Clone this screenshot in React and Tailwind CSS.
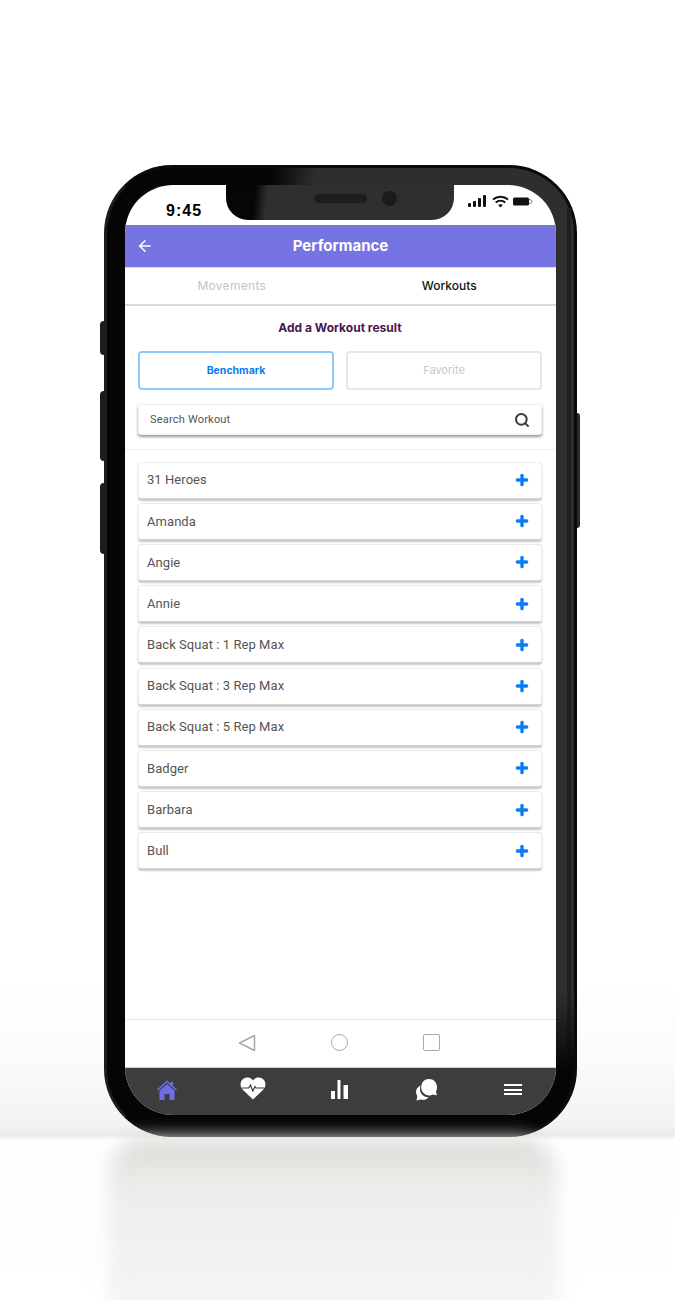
import { ArrowLeft, Plus, Search } from "lucide-react";

const workouts = [
  "31 Heroes",
  "Amanda",
  "Angie",
  "Annie",
  "Back Squat : 1 Rep Max",
  "Back Squat : 3 Rep Max",
  "Back Squat : 5 Rep Max",
  "Badger",
  "Barbara",
  "Bull",
];

function StatusIcons() {
  return (
    <div className="flex w-[102px] items-center gap-[4px] pl-[14px] pt-[10px]">
      <svg width="20" height="13" viewBox="0 0 20 13" fill="#111">
        <rect x="0" y="8" width="3" height="4" rx="1" />
        <rect x="5" y="6" width="3" height="6" rx="1" />
        <rect x="10" y="3" width="3" height="9" rx="1" />
        <rect x="15" y="0" width="3" height="12" rx="1" />
      </svg>
      <svg width="17" height="13" viewBox="0 0 17 13" fill="none" stroke="#111" strokeWidth="2">
        <path d="M1 4.500c4.200-3.700 10.800-3.700 15 0" />
        <path d="M3.700 7.500c2.800-2.300 6.800-2.300 9.600 0" />
        <path d="M8.500 12.500l-2.400-2.600c1.400-1 3.400-1 4.800 0z" fill="#111" stroke="none" />
      </svg>
      <svg width="20" height="10" viewBox="0 0 20 10">
        <rect x="0" y="0.500" width="16" height="8" rx="1.500" fill="#111" />
        <path d="M16 2.500c2 0 3 1 3 2s-1 2-3 2" fill="none" stroke="#777" strokeWidth="1" />
      </svg>
    </div>
  );
}

function Notch() {
  return (
    <div className="flex h-[35px] w-[228px] items-center gap-[15px] rounded-b-[22px] bg-[linear-gradient(96deg,#060606_0,#060606_30px,#2f2f2f_42px)] pb-[8px] pl-[88px]">
      <div className="h-[9px] w-[53px] shrink-0 rounded-full bg-[#1d1d1d]" />
      <div className="h-[15px] w-[15px] shrink-0 rounded-full bg-[#1b1b1b]" />
    </div>
  );
}

function WorkoutRow({ name }) {
  return (
    <div className="flex h-[37px] items-center justify-between rounded-[3px] border border-[#ececec] border-b-[#d4d4d4] bg-white pl-[8px] pr-[11px] shadow-[0_2px_2px_rgba(0,0,0,0.22)]">
      <span className="text-[13px] tracking-[0.06px] text-[#555]">{name}</span>
      <Plus size={16} strokeWidth={5} className="text-[#0a7cf5]" />
    </div>
  );
}

function BottomNav() {
  return (
    <div className="grid h-[48px] grid-cols-5 items-center justify-items-center border-t border-[#e8c9cf] bg-[#3d3d3d] pb-[4px]">
      <svg width="20" height="20" viewBox="0 0 20 20" fill="#6f6ee8" className="-ml-[2px]">
        <path d="M10 0.500L0 9.500l1 1L10 2.600l9 7.900 1-1-4-3.500V2h-2.500v1.800z" />
        <path d="M10 4L2.500 10.500V20h5v-6h5v6h5v-9.500z" />
      </svg>
      <svg width="26" height="23" viewBox="0 0 26 23" fill="#fff" className="-ml-[2px] -mt-[2px]">
        <path d="M13 22.500L3 13C-1.500 8.500 0.500 1 7 0.500c2.600-.2 4.800 1 6 3 1.200-2 3.400-3.200 6-3 6.500.5 8.500 8 4 12.500z" />
        <path d="M2 11h6.800l1.600-3 2.400 6 2.200-4.400 1 1.400H24" fill="none" stroke="#3d3d3d" strokeWidth="1.200" />
      </svg>
      <svg width="18" height="19" viewBox="0 0 18 19" fill="#fff" className="-ml-[1px]">
        <rect x="0" y="11" width="4" height="8" />
        <rect x="6.500" y="0" width="3" height="19" />
        <rect x="12.500" y="5" width="4.500" height="14" />
      </svg>
      <svg width="21" height="22" viewBox="0 0 21 22" fill="#fff" className="-ml-[1px]">
        <path d="M5 6.500C2 7.500 0 10 0 13c0 1.500.5 2.800 1.300 4L.5 21.500l4.200-1c1.800.6 4 .5 5.800-.5 1-.6 1.500-1.300 2-2-4.500.4-8.300-3-8.500-7.500 0-1.500.1-2.800.5-4z" />
        <path d="M13 0C8.500 0 5.200 3.500 5.200 8.300c0 4.500 3.500 8.200 7.800 8.200 1.300 0 2.800-.4 3.800-1l4.200.8-1.100-3.700c1-1.300 1.100-2.800 1.100-4.300C21 3.500 17.500 0 13 0z" />
      </svg>
      <div className="flex w-[18px] flex-col gap-[2.500px]">
        <div className="h-[2px] bg-white" />
        <div className="h-[2px] bg-white" />
        <div className="h-[2px] bg-white" />
      </div>
    </div>
  );
}

export default function App() {
  return (
    <div className="h-[1300px] w-[675px] overflow-hidden bg-[linear-gradient(180deg,#ffffff_0,#ffffff_980px,#fbfbfa_1060px,#f4f3f1_1125px,#eceae8_1135px,#fefefe_1140px,#ffffff_1300px)] pl-[104px] pt-[165px] font-['Roboto',sans-serif]">
      {/* phone body */}
      <div className="relative h-[972px] w-[473px] rounded-[68px] border-[3px] border-[#0a0a0a] border-l-[#1c1c1c] bg-[linear-gradient(100deg,#050505_0,#050505_26%,#2e2e2e_33%,#2e2e2e_100%)] py-[17px] pl-[18px] pr-[16px]">
        <div className="absolute -left-[7px] top-[153px] h-[34px] w-[4px] rounded-l-sm bg-[#1c1c1c]" />
        <div className="absolute -left-[7px] top-[223px] h-[70px] w-[4px] rounded-l-sm bg-[#1c1c1c]" />
        <div className="absolute -left-[7px] top-[315px] h-[71px] w-[4px] rounded-l-sm bg-[#1c1c1c]" />
        <div className="absolute -right-[6px] top-[245px] h-[115px] w-[3px] rounded-r-sm bg-[#2a2a2a]" />
        <div className="absolute inset-y-[40px] right-[3px] w-[4px] bg-[#202020]" />
        <div className="absolute inset-x-0 bottom-0 h-[140px] rounded-b-[65px] bg-[linear-gradient(180deg,transparent_0,#050505_55%)]" />

        <div className="relative flex h-[930px] w-[431px] flex-col overflow-hidden rounded-[48px] bg-white">
          <div className="flex h-[40px] shrink-0 items-start">
            <div className="w-[101px] pl-[41px] pt-[16px] font-['Liberation_Sans',sans-serif] text-[16px] font-bold leading-[19px] tracking-[1px] text-black">
              9:45
            </div>
            <Notch />
            <StatusIcons />
          </div>

          <header className="relative flex h-[42px] shrink-0 items-center justify-center bg-[#7674e3]">
            <ArrowLeft size={18} strokeWidth={2} className="absolute left-[11px] text-white" />
            <span className="pt-px font-['Inter',sans-serif] text-[15px] font-bold text-white">Performance</span>
          </header>

          <div className="grid h-[39px] shrink-0 grid-cols-2 items-center border-b-2 border-t border-b-[#d9d9d9] border-t-[#dddddd] font-['Inter',sans-serif] text-[12px]">
            <span className="pr-[2px] text-center tracking-[0.3px] text-[#c4c4c4]">Movements</span>
            <span className="pl-[2px] text-center font-medium text-[#111]">Workouts</span>
          </div>

          <div className="flex h-[144px] shrink-0 flex-col border-b border-[#efefef] pl-[13px] pr-[14px]">
            <h2 className="pt-[14px] text-center font-['Inter',sans-serif] text-[12px] font-bold leading-[15px] text-[#4a1550]">
              Add a Workout result
            </h2>
            <div className="mt-[16px] grid grid-cols-2 gap-[12px]">
              <div className="flex h-[39px] items-center justify-center rounded-[4px] border-2 border-[#8ec8fb] font-['Inter',sans-serif] text-[10.500px] font-bold text-[#0a7cf5]">
                Benchmark
              </div>
              <div className="flex h-[39px] items-center justify-center rounded-[4px] border-2 border-[#e6e6e6] font-['Inter',sans-serif] text-[11px] text-[#c8c8c8]">
                Favorite
              </div>
            </div>
            <div className="mt-[14px] flex h-[31px] items-center justify-between rounded-[3px] border border-[#efefef] bg-white px-[11px] shadow-[0_2px_3px_rgba(0,0,0,0.4)]">
              <span className="pt-[2px] text-[11px] tracking-[0.2px] text-[#555]">Search Workout</span>
              <Search size={16} strokeWidth={3} className="text-[#3c3c3c]" />
            </div>
          </div>

          <div className="flex flex-1 flex-col gap-[4.200px] pl-[13px] pr-[14px] pt-[11.600px]">
            {workouts.map((name) => (
              <WorkoutRow key={name} name={name} />
            ))}
          </div>

          <div className="flex h-[48px] shrink-0 items-center justify-center gap-[75px] border-t border-[#e9e4e4] pb-[2px] pr-[4px]">
            <svg width="18" height="18" viewBox="0 0 18 18" fill="none" stroke="#a8a8a8" strokeWidth="1.500" strokeLinejoin="round">
              <path d="M16.500 1.500v15L1.500 9z" />
            </svg>
            <div className="h-[17px] w-[17px] rounded-full border-[1.500px] border-[#a8a8a8]" />
            <div className="h-[17px] w-[17px] rounded-[2px] border-[1.500px] border-[#a8a8a8]" />
          </div>

          <BottomNav />
        </div>
      </div>

      {/* floor reflection */}
      <div className="ml-[4px] h-[175px] w-[450px] rounded-t-[40px] bg-[linear-gradient(180deg,#dddbd8_0,#eeedeb_30%,#f6f5f4_100%)] blur-[9px]" />
    </div>
  );
}
